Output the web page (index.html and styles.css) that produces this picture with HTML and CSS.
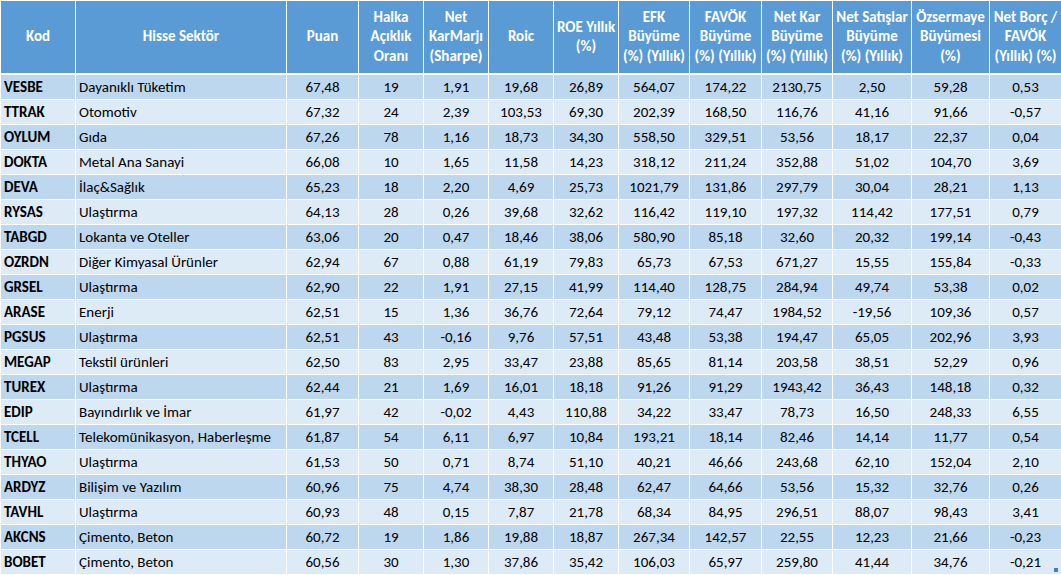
FILE: index.html
```html
<!DOCTYPE html>
<html lang="tr">
<head>
<meta charset="utf-8">
<title>Hisse Tablosu</title>
<link rel="stylesheet" href="styles.css">
</head>
<body>
<div class="wrap">
<table class="sheet">
<colgroup>
<col class="w-kod"><col class="w-sektor"><col class="w-puan"><col class="w-65"><col class="w-65"><col class="w-65"><col class="w-65"><col class="w-71"><col class="w-72"><col class="w-71"><col class="w-79"><col class="w-78"><col class="w-last">
</colgroup>
<thead>
<tr>
<th>Kod</th>
<th>Hisse Sektör</th>
<th>Puan</th>
<th>Halka<br>Açıklık<br>Oranı</th>
<th>Net<br>KarMarjı<br>(Sharpe)</th>
<th>Roic</th>
<th>ROE Yıllık<br>(%)</th>
<th>EFK<br>Büyüme<br>(%) (Yıllık)</th>
<th>FAVÖK<br>Büyüme<br>(%) (Yıllık)</th>
<th>Net Kar<br>Büyüme<br>(%) (Yıllık)</th>
<th>Net Satışlar<br>Büyüme<br>(%) (Yıllık)</th>
<th>Özsermaye<br>Büyümesi<br>(%)</th>
<th>Net Borç /<br>FAVÖK<br>(Yıllık) (%)</th>
</tr>
</thead>
<tbody>
<tr><td class="kod">VESBE</td><td class="sek">Dayanıklı Tüketim</td><td>67,48</td><td>19</td><td>1,91</td><td>19,68</td><td>26,89</td><td>564,07</td><td>174,22</td><td>2130,75</td><td>2,50</td><td>59,28</td><td>0,53</td></tr>
<tr><td class="kod">TTRAK</td><td class="sek">Otomotiv</td><td>67,32</td><td>24</td><td>2,39</td><td>103,53</td><td>69,30</td><td>202,39</td><td>168,50</td><td>116,76</td><td>41,16</td><td>91,66</td><td>-0,57</td></tr>
<tr><td class="kod">OYLUM</td><td class="sek">Gıda</td><td>67,26</td><td>78</td><td>1,16</td><td>18,73</td><td>34,30</td><td>558,50</td><td>329,51</td><td>53,56</td><td>18,17</td><td>22,37</td><td>0,04</td></tr>
<tr><td class="kod">DOKTA</td><td class="sek">Metal Ana Sanayi</td><td>66,08</td><td>10</td><td>1,65</td><td>11,58</td><td>14,23</td><td>318,12</td><td>211,24</td><td>352,88</td><td>51,02</td><td>104,70</td><td>3,69</td></tr>
<tr><td class="kod">DEVA</td><td class="sek">İlaç&amp;Sağlık</td><td>65,23</td><td>18</td><td>2,20</td><td>4,69</td><td>25,73</td><td>1021,79</td><td>131,86</td><td>297,79</td><td>30,04</td><td>28,21</td><td>1,13</td></tr>
<tr><td class="kod">RYSAS</td><td class="sek">Ulaştırma</td><td>64,13</td><td>28</td><td>0,26</td><td>39,68</td><td>32,62</td><td>116,42</td><td>119,10</td><td>197,32</td><td>114,42</td><td>177,51</td><td>0,79</td></tr>
<tr><td class="kod">TABGD</td><td class="sek">Lokanta ve Oteller</td><td>63,06</td><td>20</td><td>0,47</td><td>18,46</td><td>38,06</td><td>580,90</td><td>85,18</td><td>32,60</td><td>20,32</td><td>199,14</td><td>-0,43</td></tr>
<tr><td class="kod">OZRDN</td><td class="sek">Diğer Kimyasal Ürünler</td><td>62,94</td><td>67</td><td>0,88</td><td>61,19</td><td>79,83</td><td>65,73</td><td>67,53</td><td>671,27</td><td>15,55</td><td>155,84</td><td>-0,33</td></tr>
<tr><td class="kod">GRSEL</td><td class="sek">Ulaştırma</td><td>62,90</td><td>22</td><td>1,91</td><td>27,15</td><td>41,99</td><td>114,40</td><td>128,75</td><td>284,94</td><td>49,74</td><td>53,38</td><td>0,02</td></tr>
<tr><td class="kod">ARASE</td><td class="sek">Enerji</td><td>62,51</td><td>15</td><td>1,36</td><td>36,76</td><td>72,64</td><td>79,12</td><td>74,47</td><td>1984,52</td><td>-19,56</td><td>109,36</td><td>0,57</td></tr>
<tr><td class="kod">PGSUS</td><td class="sek">Ulaştırma</td><td>62,51</td><td>43</td><td>-0,16</td><td>9,76</td><td>57,51</td><td>43,48</td><td>53,38</td><td>194,47</td><td>65,05</td><td>202,96</td><td>3,93</td></tr>
<tr><td class="kod">MEGAP</td><td class="sek">Tekstil ürünleri</td><td>62,50</td><td>83</td><td>2,95</td><td>33,47</td><td>23,88</td><td>85,65</td><td>81,14</td><td>203,58</td><td>38,51</td><td>52,29</td><td>0,96</td></tr>
<tr><td class="kod">TUREX</td><td class="sek">Ulaştırma</td><td>62,44</td><td>21</td><td>1,69</td><td>16,01</td><td>18,18</td><td>91,26</td><td>91,29</td><td>1943,42</td><td>36,43</td><td>148,18</td><td>0,32</td></tr>
<tr><td class="kod">EDIP</td><td class="sek">Bayındırlık ve İmar</td><td>61,97</td><td>42</td><td>-0,02</td><td>4,43</td><td>110,88</td><td>34,22</td><td>33,47</td><td>78,73</td><td>16,50</td><td>248,33</td><td>6,55</td></tr>
<tr><td class="kod">TCELL</td><td class="sek">Telekomünikasyon, Haberleşme</td><td>61,87</td><td>54</td><td>6,11</td><td>6,97</td><td>10,84</td><td>193,21</td><td>18,14</td><td>82,46</td><td>14,14</td><td>11,77</td><td>0,54</td></tr>
<tr><td class="kod">THYAO</td><td class="sek">Ulaştırma</td><td>61,53</td><td>50</td><td>0,71</td><td>8,74</td><td>51,10</td><td>40,21</td><td>46,66</td><td>243,68</td><td>62,10</td><td>152,04</td><td>2,10</td></tr>
<tr><td class="kod">ARDYZ</td><td class="sek">Bilişim ve Yazılım</td><td>60,96</td><td>75</td><td>4,74</td><td>38,30</td><td>28,48</td><td>62,47</td><td>64,66</td><td>53,56</td><td>15,32</td><td>32,76</td><td>0,26</td></tr>
<tr><td class="kod">TAVHL</td><td class="sek">Ulaştırma</td><td>60,93</td><td>48</td><td>0,15</td><td>7,87</td><td>21,78</td><td>68,34</td><td>84,95</td><td>296,51</td><td>88,07</td><td>98,43</td><td>3,41</td></tr>
<tr><td class="kod">AKCNS</td><td class="sek">Çimento, Beton</td><td>60,72</td><td>19</td><td>1,86</td><td>19,88</td><td>18,87</td><td>267,34</td><td>142,57</td><td>22,55</td><td>12,23</td><td>21,66</td><td>-0,23</td></tr>
<tr><td class="kod">BOBET</td><td class="sek">Çimento, Beton</td><td>60,56</td><td>30</td><td>1,30</td><td>37,86</td><td>35,42</td><td>106,03</td><td>65,97</td><td>259,80</td><td>41,44</td><td>34,76</td><td>-0,21</td></tr>
</tbody>
</table>
<span class="handle"></span>
</div>
</body>
</html>
```

FILE: styles.css
```css
html, body {
  margin: 0;
  padding: 0;
  background: #ffffff;
}

.wrap {
  position: relative;
  width: 1061px;
}

.sheet {
  border-collapse: collapse;
  table-layout: fixed;
  width: 1061px;
  font-family: Carlito, Lato, "Open Sans", sans-serif;
  font-size: 15px;
  color: #000000;
}

.w-kod { width: 75px; }
.w-sektor { width: 211px; }
.w-puan { width: 72px; }
.w-65 { width: 65px; }
.w-71 { width: 71px; }
.w-72 { width: 72px; }
.w-79 { width: 79px; }
.w-78 { width: 78px; }
.w-last { width: 72px; }

.sheet th,
.sheet td {
  border: 1px solid #ffffff;
  padding: 0 3px;
  white-space: nowrap;
  overflow: hidden;
  text-align: center;
}

.sheet th {
  background: #5b9bd5;
  color: #ffffff;
  font-weight: bold;
  height: 72px;
  line-height: 19.5px;
  border-bottom-width: 2px;
}

.sheet td {
  height: 24px;
  line-height: 24px;
}

.sheet tbody tr:nth-child(odd) td {
  background: #bdd7ee;
}

.sheet tbody tr:nth-child(even) td {
  background: #ddebf7;
}

.sheet td.kod {
  text-align: left;
  font-weight: bold;
}

.sheet td.sek {
  text-align: left;
}

.handle {
  position: absolute;
  right: 3px;
  bottom: 3px;
  width: 4px;
  height: 4px;
  background: #4a7ebb;
}
```
